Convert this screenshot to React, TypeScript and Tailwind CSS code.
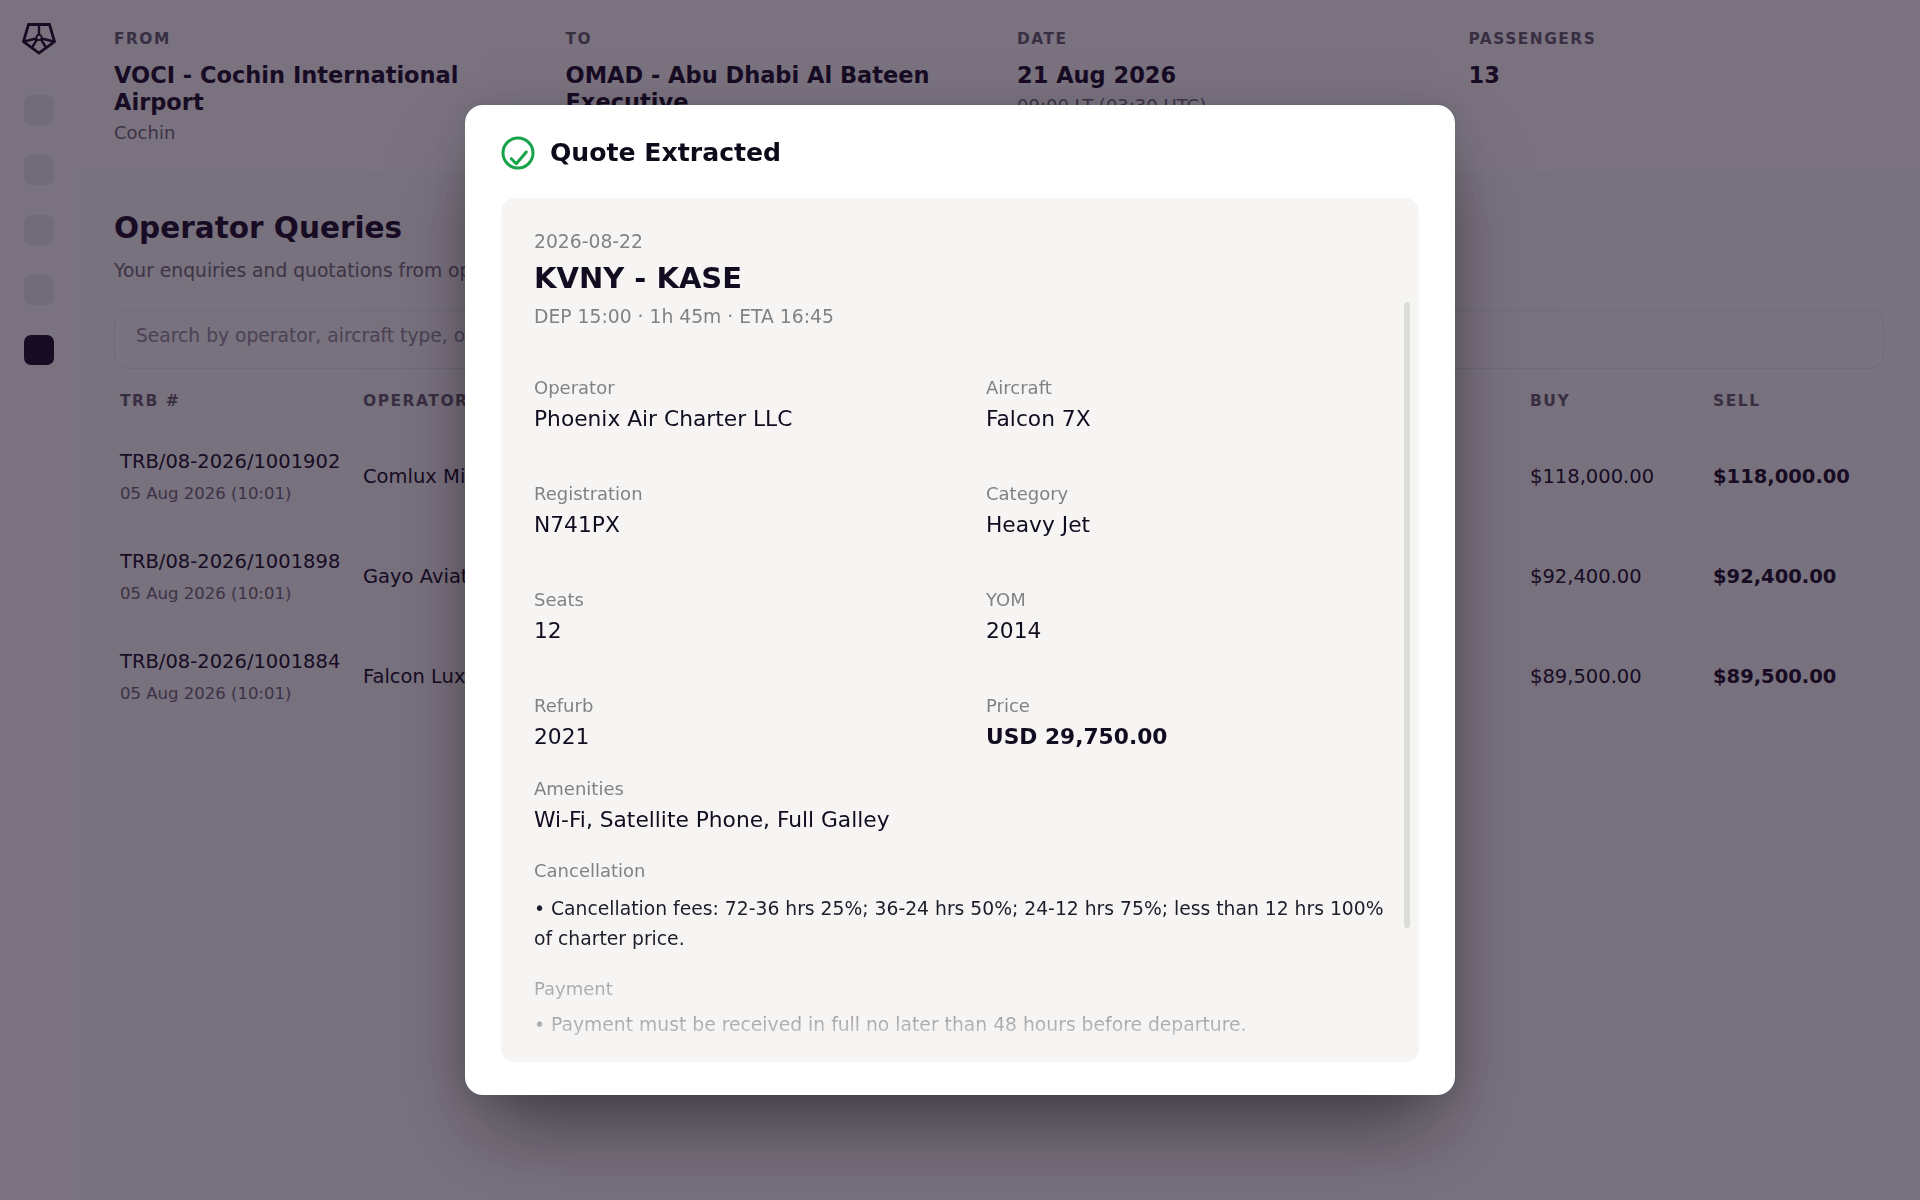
const font = { fontFamily: '"DejaVu Sans", sans-serif' };

const headerCols = [
  { label: 'FROM', title: 'VOCI - Cochin International Airport', sub: 'Cochin' },
  { label: 'TO', title: 'OMAD - Abu Dhabi Al Bateen Executive', sub: 'Abu Dhabi' },
  { label: 'DATE', title: '21 Aug 2026', sub: '09:00 LT (03:30 UTC)' },
  { label: 'PASSENGERS', title: '13', sub: '' },
];

const rows = [
  { trb: 'TRB/08-2026/1001902', operator: 'Comlux Middle East', buy: '$118,000.00' },
  { trb: 'TRB/08-2026/1001898', operator: 'Gayo Aviation', buy: '$92,400.00' },
  { trb: 'TRB/08-2026/1001884', operator: 'Falcon Luxury Jets', buy: '$89,500.00' },
];

const details = [
  ['Operator', 'Phoenix Air Charter LLC'],
  ['Aircraft', 'Falcon 7X'],
  ['Registration', 'N741PX'],
  ['Category', 'Heavy Jet'],
  ['Seats', '12'],
  ['YOM', '2014'],
  ['Refurb', '2021'],
  ['Price', 'USD 29,750.00'],
];

function Logo() {
  return (
    <svg viewBox="0 0 34 32" className="h-[32px] w-[34px]" fill="none" stroke="#0f0520" strokeWidth="2.8">
      <path d="M6.5 1.5H27.5L32.5 18.5L17 30L1.5 18.5Z" />
      <path d="M17 2V11.5M2.5 18.5L14 15.5M31.5 18.5L20 15.5M15 16.5L10 24.5M19 16.5L24 24.5" strokeWidth="2.4" />
      <circle cx="17" cy="14.5" r="2.6" strokeWidth="1.6" />
    </svg>
  );
}

function CheckIcon() {
  return (
    <svg viewBox="0 0 34 34" className="h-[34px] w-[34px] shrink-0" fill="none" stroke="#16a34a" strokeWidth="3" strokeLinecap="round" strokeLinejoin="round">
      <circle cx="17" cy="17" r="15" />
      <path d="M10.3 22.7L15.3 27.7L25.3 16" />
    </svg>
  );
}

function Page() {
  return (
    <div className="flex h-[1200px] overflow-hidden bg-[#f6f5f7] text-[#0f0520]">
      <aside className="flex w-[78px] shrink-0 flex-col items-center bg-[#faf9fb] pt-[23px]">
        <Logo />
        <div className="mt-[40px] flex flex-col gap-[30px]">
          {[0, 1, 2, 3].map((i) => (
            <div key={i} className="h-[30px] w-[30px] rounded-[7px] bg-[#e6e6ea]" />
          ))}
          <div className="h-[30px] w-[30px] rounded-[7px] bg-[#0f0520]" />
        </div>
      </aside>
      <main className="min-w-0 flex-1">
        <div className="grid h-[172px] grid-cols-4 bg-[#faf9fb] pl-[36px] pt-[30px]">
          {headerCols.map((c) => (
            <div key={c.label} className="pr-[60px]">
              <div className="text-[15.4px] leading-[18px] font-bold tracking-[1.5px] text-[#5f596a]">{c.label}</div>
              <div className="mt-[14px] text-[22.5px] leading-[27px] font-bold">{c.title}</div>
              <div className="mt-[4px] text-[18px] leading-[25px] text-[#6a6474]">{c.sub}</div>
            </div>
          ))}
        </div>
        <div className="px-[36px] pt-[37px]">
          <h1 className="text-[29.5px] leading-[38px] font-bold">Operator Queries</h1>
          <p className="mt-[12px] text-[18.7px] leading-[24px] text-[#6a6474]">Your enquiries and quotations from operators</p>
          <div className="mt-[27px] flex h-[59px] items-center rounded-[14px] border border-[#e4e2e8] px-[21px] pb-[6px] text-[18.7px] text-[#8a8594]">
            Search by operator, aircraft type, or TRB number
          </div>
          <div className="mt-[22px] grid grid-cols-[243px_1167px_183px_1fr] px-[6px] text-[15.5px] leading-[20px] font-bold tracking-[1.5px] text-[#5f596a]">
            <div>TRB #</div>
            <div>OPERATOR</div>
            <div>BUY</div>
            <div>SELL</div>
          </div>
          <div className="mt-[16px] flex flex-col">
            {rows.map((r) => (
              <div key={r.trb} className="grid h-[100px] grid-cols-[243px_1167px_183px_1fr] items-center px-[6px] text-[19.5px]">
                <div>
                  <div className="leading-[24px]">{r.trb}</div>
                  <div className="mt-[9px] text-[16.5px] leading-[22px] text-[#686272]">05 Aug 2026 (10:01)</div>
                </div>
                <div>{r.operator}</div>
                <div>{r.buy}</div>
                <div className="font-bold">{r.buy}</div>
              </div>
            ))}
          </div>
        </div>
      </main>
    </div>
  );
}

function Modal() {
  return (
    <div className="fixed inset-0 flex items-center justify-center bg-[#1e1226]/58 backdrop-blur-[0.5px]">
      <div className="flex h-[990px] w-[990px] flex-col rounded-[18px] bg-white px-[36px] pt-[28px] pb-[33px] shadow-[0_45px_80px_-20px_rgba(0,0,0,0.5),0_0_30px_rgba(0,0,0,0.12)]">
        <div className="flex items-center gap-[15px]">
          <CheckIcon />
          <h2 className="pt-[1px] text-[25.15px] leading-[38px] font-bold text-[#0f0a1a]">Quote Extracted</h2>
        </div>
        <div className="relative mt-[26px] min-h-0 flex-1 overflow-hidden rounded-[14px] bg-[#f6f5f4] px-[33px] pt-[31px]">
          <div className="text-[18.75px] leading-[25px] text-[#828282]">2026-08-22</div>
          <div className="mt-[4px] text-[29px] leading-[40px] font-bold text-[#120c20]">KVNY - KASE</div>
          <div className="mt-[6px] text-[18.75px] leading-[25px] text-[#828282]">DEP 15:00 · 1h 45m · ETA 16:45</div>
          <div className="mt-[46px] grid grid-cols-[452px_1fr] gap-y-[33px]">
            {details.map(([label, value]) => (
              <div key={label} className="h-[73px] last:font-bold">
                <div className="text-[18px] leading-[25px] font-normal text-[#828282]">{label}</div>
                <div className="mt-[3px] text-[21.75px] leading-[32px] text-[#120c20]">{value}</div>
              </div>
            ))}
          </div>
          <div className="mt-[10px] text-[18px] leading-[25px] text-[#828282]">Amenities</div>
          <div className="mt-[3px] text-[21.75px] leading-[32px] text-[#120c20]">Wi-Fi, Satellite Phone, Full Galley</div>
          <div className="mt-[22px] text-[18px] leading-[25px] text-[#828282]">Cancellation</div>
          <p className="mt-[11px] text-[18.75px] leading-[30px] text-[#1f1b2a]">
            • Cancellation fees: 72-36 hrs 25%; 36-24 hrs 50%; 24-12 hrs 75%; less than 12 hrs 100% of charter price.
          </p>
          <div className="mt-[22px] text-[18px] leading-[25px] text-[#828282]">Payment</div>
          <p className="mt-[9px] text-[18.75px] leading-[30px] text-[#1f1b2a]">• Payment must be received in full no later than 48 hours before departure.</p>
          <div className="absolute inset-x-0 bottom-0 h-[115px] bg-gradient-to-b from-[#f6f5f4]/0 to-[#f6f5f4]" />
          <div className="absolute top-[104px] right-[9px] h-[626px] w-[6px] rounded-full bg-[#dcdcda]" />
        </div>
      </div>
    </div>
  );
}

export default function App() {
  return (
    <div style={font} className="relative h-[1200px] overflow-hidden">
      <Page />
      <Modal />
    </div>
  );
}
